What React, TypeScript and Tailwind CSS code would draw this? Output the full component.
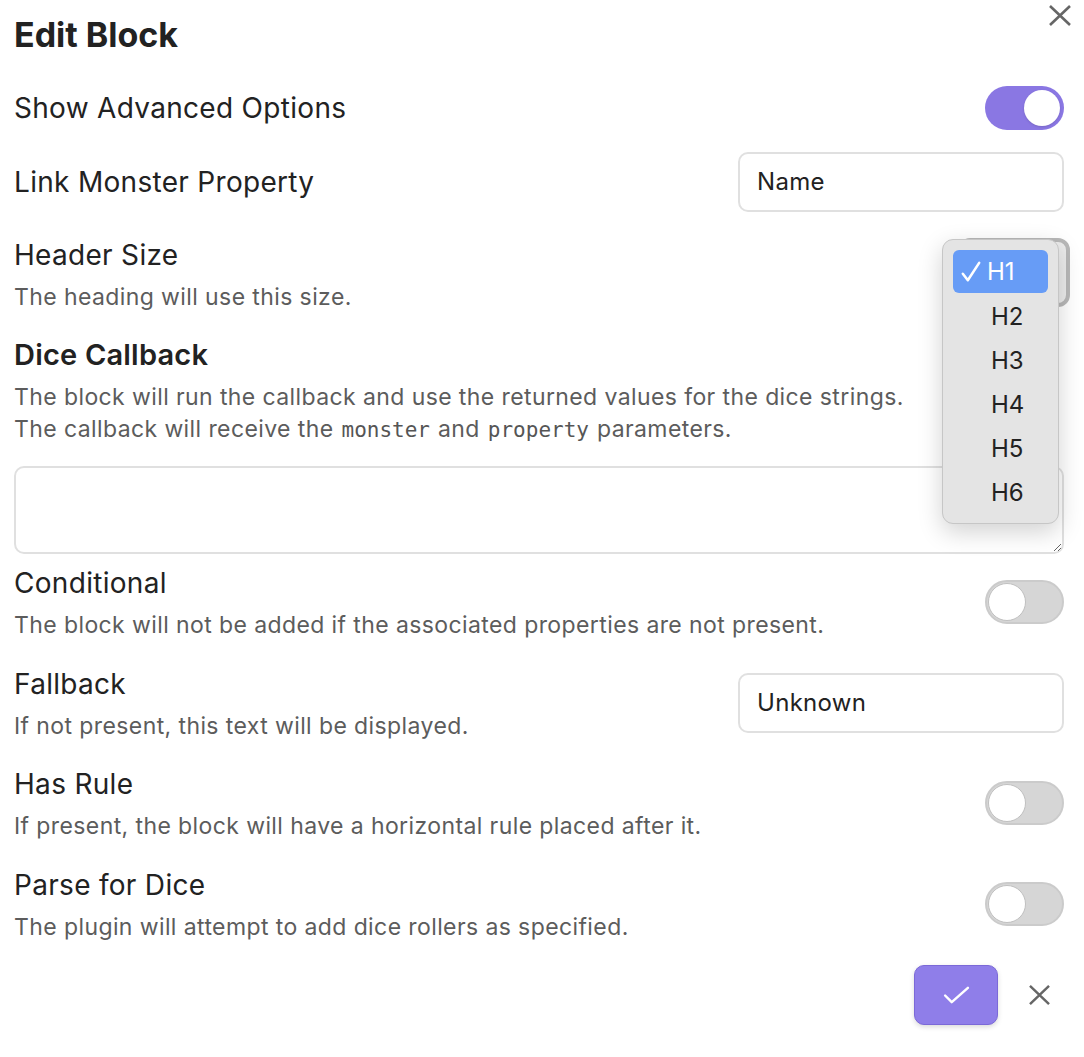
import React from "react";

const font = { fontFamily: "Inter, 'Noto Sans', sans-serif" };

const Toggle = ({ on = false }: { on?: boolean }) =>
  on ? (
    <div className="flex h-[44px] w-[79px] shrink-0 items-center justify-end rounded-full bg-[#8a77e3] pr-[4px]">
      <div className="h-[36px] w-[36px] rounded-full bg-white shadow-sm" />
    </div>
  ) : (
    <div className="flex h-[44px] w-[79px] shrink-0 items-center rounded-full border-2 border-[#cbcbcb] bg-[#d6d6d6] pl-[1px]">
      <div className="h-[38px] w-[38px] rounded-full border border-[#c0c0c0] bg-white" />
    </div>
  );

const XIcon = ({ className = "" }: { className?: string }) => (
  <svg viewBox="0 0 22 21" className={className} fill="none" stroke="#666" strokeWidth="2.6" strokeLinecap="butt">
    <path d="M1 1 L21 20 M21 1 L1 20" />
  </svg>
);

const TextInput = ({ value }: { value: string }) => (
  <div className="flex h-[60px] w-[326px] shrink-0 items-center rounded-[10px] border-2 border-[#e0e0e0] bg-white px-[17px] text-[24px] tracking-[0.3px] text-[#222]">
    {value}
  </div>
);

// label + description block
const Info = ({ name, desc }: { name: string; desc: React.ReactNode }) => (
  <div className="flex flex-col">
    <div className="text-[28px] leading-[40px] tracking-[0.3px] text-[#222]">{name}</div>
    <div className="mt-[6px] text-[23px] leading-[32px] tracking-[0.4px] text-[#5c5c5c]">{desc}</div>
  </div>
);

const Code = ({ children }: { children: React.ReactNode }) => (
  <span className="px-[8px] text-[21px] tracking-normal text-[#555]" style={{ fontFamily: "'DejaVu Sans Mono', monospace" }}>
    {children}
  </span>
);

export default function App() {
  return (
    <div className="relative min-h-[1057px] w-[1084px] bg-white pl-[14px] pr-[20px]" style={font}>
      {/* close */}
      <button className="absolute right-[13px] top-[5px]">
        <XIcon className="h-[21px] w-[22px]" />
      </button>

      {/* title */}
      <div className="flex h-[68px] items-center text-[34px] font-bold text-[#222]">Edit Block</div>

      {/* Show advanced */}
      <div className="mt-[2px] flex h-[76px] items-center justify-between">
        <div className="text-[28px] tracking-[0.3px] text-[#222]">Show Advanced Options</div>
        <Toggle on />
      </div>

      {/* Link property */}
      <div className="flex h-[72px] items-center justify-between">
        <div className="text-[28px] tracking-[0.3px] text-[#222]">Link Monster Property</div>
        <TextInput value="Name" />
      </div>

      {/* Header size */}
      <div className="mt-[17px] flex items-start justify-between">
        <Info name="Header Size" desc="The heading will use this size." />
        <div className="relative mr-[-6px] mt-[3px]">
          <div className="h-[69px] w-[112px] rounded-[12px] border-[4px] border-[#b8b8b8] bg-[#ececec]" />
          {/* dropdown */}
          <div className="absolute left-[-16px] top-[1px] z-10 flex w-[117px] flex-col rounded-[11px] border border-[#c6c6c6] bg-[#e4e4e4] px-[10px] pb-[8px] pt-[10px] shadow-[0_8px_24px_rgba(0,0,0,0.18)]">
            <div className="mb-[2px] flex h-[43px] items-center rounded-[6px] bg-[#679cf6] pl-[8px] text-[24px] text-white">
              <svg viewBox="0 0 22 24" className="mr-[6px] h-[22px] w-[20px]" fill="none" stroke="white" strokeWidth="2.8" strokeLinecap="round" strokeLinejoin="round">
                <path d="M2 14 L7.5 21 L20 2" />
              </svg>
              H1
            </div>
            {["H2", "H3", "H4", "H5", "H6"].map((h) => (
              <div key={h} className="flex h-[44px] items-center pl-[38px] text-[24px] text-[#222]">
                {h}
              </div>
            ))}
          </div>
        </div>
      </div>

      {/* Dice callback */}
      <div className="mt-[22px] flex flex-col">
        <div className="text-[29px] font-semibold leading-[40px] tracking-[0.2px] text-[#222]">Dice Callback</div>
        <div className="mt-[6px] text-[23px] leading-[32px] tracking-[0.4px] text-[#5c5c5c]">
          <div>The block will run the callback and use the returned values for the dice strings.</div>
          <div>
            The callback will receive the<Code>monster</Code>and<Code>property</Code>parameters.
          </div>
        </div>
      </div>
      <textarea className="mt-[20px] block h-[88px] w-full resize-y rounded-[10px] border-2 border-[#e0e0e0] bg-white outline-none" />

      {/* toggles / fallback */}
      <div className="mt-[9px] flex flex-col gap-[22.7px]">
        <div className="flex items-center justify-between">
          <Info name="Conditional" desc="The block will not be added if the associated properties are not present." />
          <Toggle />
        </div>
        <div className="flex items-center justify-between">
          <Info name="Fallback" desc="If not present, this text will be displayed." />
          <TextInput value="Unknown" />
        </div>
        <div className="flex items-center justify-between">
          <Info name="Has Rule" desc="If present, the block will have a horizontal rule placed after it." />
          <Toggle />
        </div>
        <div className="flex items-center justify-between">
          <Info name="Parse for Dice" desc="The plugin will attempt to add dice rollers as specified." />
          <Toggle />
        </div>
      </div>

      {/* actions */}
      <div className="mt-[22px] flex items-center justify-end gap-[31px] pr-[14px]">
        <button className="flex h-[60px] w-[84px] items-center justify-center rounded-[10px] border border-[#7b69d8] bg-[#8f7ee9] shadow-[0_2px_5px_rgba(0,0,0,0.15)]">
          <svg viewBox="0 0 28 20" className="h-[19px] w-[27px]" fill="none" stroke="white" strokeWidth="2.6" strokeLinecap="round" strokeLinejoin="round">
            <path d="M2 10 L9 17 L26 2" />
          </svg>
        </button>
        <button>
          <XIcon className="h-[20px] w-[21px]" />
        </button>
      </div>
    </div>
  );
}
